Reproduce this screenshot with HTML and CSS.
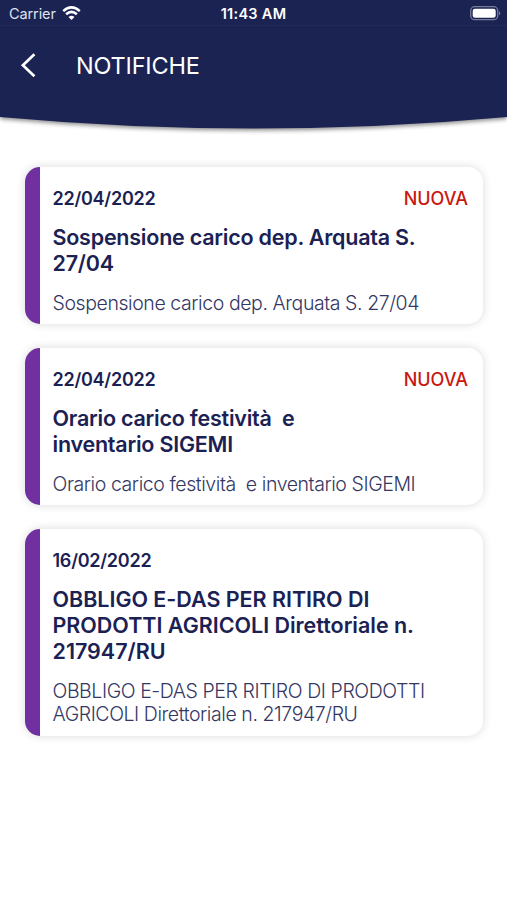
FILE: index.html
```html
<!DOCTYPE html>
<html lang="it">
<head>
<meta charset="utf-8">
<title>Notifiche</title>
<link rel="stylesheet" href="styles.css">
</head>
<body>
<header class="header">
  <svg class="header-bg" width="507" height="145" viewBox="0 0 507 145" aria-hidden="true">
    <path d="M0 0H507V117Q253.500 140 0 117Z" fill="#1b2353"/>
  </svg>
  <div class="status">
    <div class="carrier">
      <span class="carrier-name">Carrier</span>
      <svg class="wifi" width="19" height="15" viewBox="0 0 19 15" fill="none" stroke="#fff" stroke-width="2.500">
        <path d="M1.200 5.100Q9.500 -2.300 17.800 5.100"/>
        <path d="M4.100 8.300Q9.500 3.500 14.900 8.300"/>
        <path d="M9.500 14L6.500 10.900Q9.500 8.400 12.500 10.900Z" fill="#fff" stroke="none"/>
      </svg>
    </div>
    <span class="time">11:43 AM</span>
    <svg class="battery" width="31" height="15" viewBox="0 0 31 15">
      <rect x=".7" y=".7" width="27" height="13" rx="4" fill="none" stroke="#777b9b" stroke-width="1.300"/>
      <rect x="2.700" y="2.700" width="23" height="9" rx="2.300" fill="#fff"/>
      <path d="M29 5Q31.500 7.200 29 9.400Z" fill="#777b9b"/>
    </svg>
  </div>
  <nav class="bar">
    <svg class="back" width="16" height="26" viewBox="0 0 16 26" fill="none" stroke="#fff" stroke-width="2.700"><path d="M14.400 1.200L2.900 12.200L14.400 23.200"/></svg>
    <h1 class="heading">NOTIFICHE</h1>
  </nav>
</header>
<main class="list">
  <article class="card">
    <div class="meta"><time class="date">22/04/2022</time><span class="tag">NUOVA</span></div>
    <h2 class="title">Sospensione carico dep. Arquata S.<br>27/04</h2>
    <p class="text">Sospensione carico dep. Arquata S. 27/04</p>
  </article>
  <article class="card">
    <div class="meta"><time class="date">22/04/2022</time><span class="tag">NUOVA</span></div>
    <h2 class="title">Orario carico festività&nbsp; e<br>inventario SIGEMI</h2>
    <p class="text">Orario carico festività&nbsp; e inventario SIGEMI</p>
  </article>
  <article class="card">
    <div class="meta"><time class="date">16/02/2022</time></div>
    <h2 class="title title-caps">OBBLIGO E-DAS PER RITIRO DI<br>PRODOTTI AGRICOLI Direttoriale n.<br>217947/RU</h2>
    <p class="text">OBBLIGO E-DAS PER RITIRO DI PRODOTTI<br>AGRICOLI Direttoriale n. 217947/RU</p>
  </article>
</main>
</body>
</html>
```
FILE: styles.css
```css
* { box-sizing: border-box; }
body { margin: 0; min-height: 900px; background: #fff; color: #1b2153; font-family: Inter, "Liberation Sans", sans-serif; }
.header { position: relative; height: 145px; color: #fff; }
.header-bg { position: absolute; top: 0; left: 0; z-index: -1; filter: drop-shadow(0 2px 2px rgba(0, 0, 0, .45)); }
.status { display: grid; grid-template-columns: 1fr auto 1fr; align-items: center; height: 26px; padding: 1px 6px 0 9px; border-bottom: 1px solid #222a5b; }
.carrier { display: flex; align-items: center; gap: 6px; font-size: 14.5px; letter-spacing: -.1px; color: #dfe2ee; }
.time { font-size: 14.5px; font-weight: 600; letter-spacing: .3px; margin-right: 3px; }
.battery { justify-self: end; }
.bar { display: flex; align-items: center; height: 79px; padding-left: 20px; }
.heading { margin: 0 0 0 40px; font-size: 23.5px; font-weight: 400; line-height: 30px; letter-spacing: -.2px; }
.list { display: flex; flex-direction: column; gap: 23.6px; padding: 22px 24px 0 25px; }
.card { padding: 21px 15px 9px 12.5px; border-left: 15px solid #7030a0; border-radius: 15px; background: #fff; box-shadow: 0 0 10px rgba(0, 0, 0, .15); }
.meta { display: flex; justify-content: space-between; height: 22px; font-size: 18px; line-height: 22px; }
.date { font-weight: 600; letter-spacing: -.25px; }
.tag { color: #c9180f; font-weight: 500; }
.title { margin: 14px 0 16px; font-size: 21.5px; font-weight: 600; line-height: 26px; letter-spacing: -.23px; white-space: nowrap; }
.title-caps { letter-spacing: -.02px; }
.text { margin: 0; font-size: 19.5px; font-weight: 300; line-height: 23.4px; letter-spacing: -.42px; white-space: nowrap; color: #343763; }
```
